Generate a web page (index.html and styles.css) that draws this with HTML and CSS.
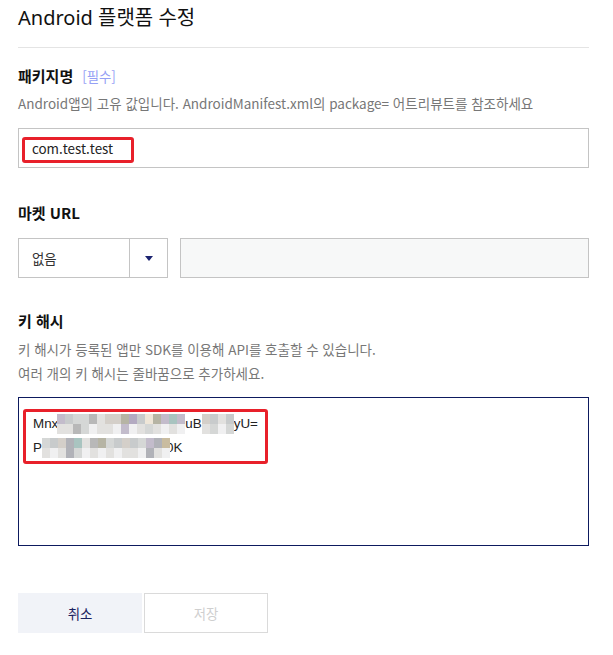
FILE: index.html
```html
<!DOCTYPE html>
<html lang="ko">
<head>
<meta charset="utf-8">
<title>Android 플랫폼 수정</title>
<link rel="stylesheet" href="styles.css">
</head>
<body>
<div class="page">
  <h1 class="title">Android 플랫폼 수정</h1>

  <section class="field field-pkg">
    <div class="label">패키지명<span class="req">[필수]</span></div>
    <p class="desc">Android앱의 고유 값입니다. AndroidManifest.xml의 package= 어트리뷰트를 참조하세요</p>
    <div class="input">
      <span class="input-text">com.test.test</span>
      <span class="mark mark-pkg"></span>
    </div>
  </section>

  <section class="field field-market">
    <div class="label">마켓 URL</div>
    <div class="market-row">
      <div class="select">
        <span class="select-value">없음</span>
        <span class="select-btn"><span class="caret"></span></span>
      </div>
      <div class="input input-disabled"></div>
    </div>
  </section>

  <section class="field field-hash">
    <div class="label">키 해시</div>
    <p class="desc desc-multi">키 해시가 등록된 앱만 SDK를 이용해 API를 호출할 수 있습니다.<br>여러 개의 키 해시는 줄바꿈으로 추가하세요.</p>
    <div class="textarea">
      <div class="hash-line">Mnx<span class="mosaic mosaic-a"><i class="ka"></i><i class="k3"></i><i class="k2"></i><i class="k2"></i><i class="k4"></i><i class="k1"></i><i class="k5"></i><i class="k5"></i><i class="k9"></i><i class="k6"></i><i class="k3"></i><i class="k8"></i><i class="k9"></i><i class="ka"></i><i class="k7"></i><i class="ka"></i><i class="k1"></i><i class="k1"></i><i class="k4"></i><i class="k2"></i><i class="k0"></i><i class="k1"></i><i class="k1"></i><i class="k0"></i><i class="ka"></i><i class="k0"></i><i class="k1"></i><i class="k2"></i><i class="k1"></i><i class="k0"></i><i class="k1"></i><i class="k0"></i></span>uB<span class="mosaic mosaic-b"><i class="k5"></i><i class="k3"></i><i class="k1"></i><i class="k3"></i><i class="k1"></i><i class="k2"></i><i class="k0"></i><i class="k2"></i></span>yU=</div>
      <div class="hash-line">P<span class="mosaic mosaic-c"><i class="k2"></i><i class="k3"></i><i class="k5"></i><i class="kb"></i><i class="k7"></i><i class="k1"></i><i class="k4"></i><i class="k9"></i><i class="k2"></i><i class="k3"></i><i class="k5"></i><i class="k3"></i><i class="k2"></i><i class="ka"></i><i class="kb"></i><i class="kc"></i><i class="k1"></i><i class="k0"></i><i class="k1"></i><i class="kb"></i><i class="k2"></i><i class="k0"></i><i class="k1"></i><i class="k0"></i><i class="k1"></i><i class="k0"></i><i class="k1"></i><i class="k1"></i><i class="k0"></i><i class="kb"></i><i class="k1"></i><i class="k0"></i></span>0K</div>
      <span class="mark mark-hash"></span>
    </div>
  </section>

  <div class="actions">
    <button class="btn btn-cancel" type="button">취소</button>
    <button class="btn btn-save" type="button">저장</button>
  </div>
</div>
</body>
</html>
```

FILE: styles.css
```css
* { box-sizing: border-box; }

html, body {
  margin: 0;
  padding: 0;
  background: #ffffff;
}

body {
  font-family: "Noto Sans CJK KR", "Noto Sans", sans-serif;
  color: #222222;
}

.page {
  width: 589px;
  padding: 4px 0 0 18px;
}

.title {
  margin: 0;
  padding: 0 0 15px 0;
  font-family: "Noto Sans", "Noto Sans CJK KR", sans-serif;
  font-size: 20px;
  font-weight: 400;
  line-height: 28px;
  color: #111111;
  border-bottom: 1px solid #e4e4e4;
}

.field-pkg { padding-top: 17px; }
.field-market { padding-top: 34px; }
.field-hash { padding-top: 32px; }

.label {
  display: flex;
  align-items: baseline;
  gap: 9px;
  font-size: 15px;
  font-weight: 700;
  line-height: 22px;
  color: #111111;
}

.req {
  font-size: 13.4px;
  font-weight: 400;
  color: #95a0f5;
}

.desc {
  margin: 6px 0 15px 0;
  font-size: 13.5px;
  line-height: 20px;
  color: #777777;
}

.desc-multi {
  margin: 5px 0 12px 0;
  line-height: 24px;
}

.input {
  position: relative;
  display: flex;
  align-items: center;
  height: 40px;
  padding: 0 13px;
  border: 1px solid #c4c4c4;
  background: #ffffff;
}

.input-text {
  font-size: 13.4px;
  color: #222222;
}

.mark {
  position: absolute;
  border: 3px solid #e8202a;
  border-radius: 3px;
  pointer-events: none;
}

.mark-pkg {
  left: 3px;
  top: 8px;
  width: 112px;
  height: 26px;
}

.market-row {
  display: flex;
  gap: 12px;
  margin-top: 14px;
}

.select {
  display: flex;
  width: 150px;
  height: 40px;
  border: 1px solid #c4c4c4;
  background: #ffffff;
}

.select-value {
  flex: 1;
  display: flex;
  align-items: center;
  padding-left: 13px;
  font-size: 13.4px;
  color: #333333;
  border-right: 1px solid #c4c4c4;
}

.select-btn {
  width: 37px;
  display: flex;
  align-items: center;
  justify-content: center;
}

.caret {
  width: 0;
  height: 0;
  border-left: 4px solid transparent;
  border-right: 4px solid transparent;
  border-top: 5px solid #1b2370;
}

.input-disabled {
  flex: 1;
  background: #f7f8f8;
}

.textarea {
  position: relative;
  height: 149px;
  padding: 14px 14px;
  border: 1px solid #0d1a5e;
  font-family: "Liberation Sans", Arial, sans-serif;
  font-size: 13.4px;
  line-height: 24px;
  color: #222222;
}

.hash-line {
  display: flex;
  align-items: center;
  height: 24px;
}

.mosaic {
  display: inline-grid;
  grid-auto-rows: 10px;
  height: 20px;
  filter: blur(0.6px);
}

.mosaic i {
  display: block;
}

.mosaic-a { grid-template-columns: repeat(16, 8px); margin-left: -1px; }
.mosaic-b { grid-template-columns: repeat(4, 8px); }
.mosaic-c { grid-template-columns: repeat(16, 8px); margin-right: -4px; position: relative; }

.k0 { background: #f0f0f1; }
.k1 { background: #e2e1df; }
.k2 { background: #d5d7d6; }
.k3 { background: #c8cbcc; }
.k4 { background: #b8b8b8; }
.k5 { background: #d4cfc9; }
.k6 { background: #b3aac1; }
.k7 { background: #a9c4c0; }
.k8 { background: #efe6d8; }
.k9 { background: #b6b4a4; }
.ka { background: #c3bccb; }
.kb { background: #b1b2b8; }
.kc { background: #c9bca0; }

.mark-hash {
  left: 4px;
  top: 11px;
  width: 245px;
  height: 55px;
}

.actions {
  display: flex;
  gap: 2px;
  margin-top: 47px;
}

.btn {
  width: 124px;
  height: 40px;
  border: 1px solid transparent;
  font-family: "Noto Sans CJK KR", sans-serif;
  font-size: 13.4px;
  background: #ffffff;
  padding: 0;
}

.btn-cancel {
  background: #f1f3f8;
  color: #1b2260;
}

.btn-save {
  border-color: #dadada;
  color: #cfcfcf;
}
```
